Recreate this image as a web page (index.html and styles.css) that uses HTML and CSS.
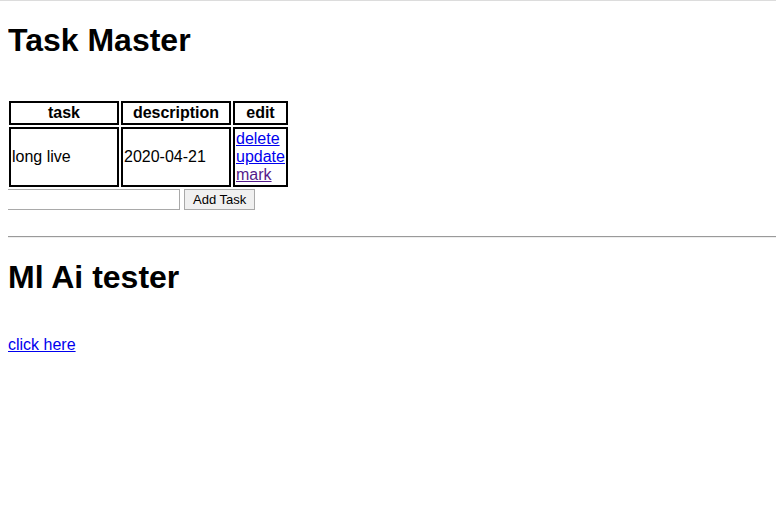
FILE: index.html
```html
<!DOCTYPE html>
<html>
<head>
<meta charset="utf-8">
<title>Task Master</title>
<link rel="stylesheet" href="styles.css">
</head>
<body>
<h1 class="title">Task Master</h1>
<div class="spacer"></div>
<table class="tasks">
  <tr>
    <th class="cell">task</th>
    <th class="cell">description</th>
    <th class="cell">edit</th>
  </tr>
  <tr>
    <td class="cell col-task">long live</td>
    <td class="cell col-desc">2020-04-21</td>
    <td class="cell col-edit">
      <a href="#" class="link">delete</a><br>
      <a href="#" class="link">update</a><br>
      <a href="#" class="link visited">mark</a>
    </td>
  </tr>
</table>
<form class="add-form">
  <input type="text" class="task-input"> <button type="button" class="add-btn">Add Task</button>
</form>
<div class="divider"></div>
<h1 class="title">Ml Ai tester</h1>
<p class="link-row"><a href="#" class="link">click here</a></p>
</body>
</html>
```
FILE: styles.css
```css
html {
  border-top: 1px solid #dcdcdc;
}
body {
  margin: 0 0 8px 8px;
  font-family: "Liberation Sans", Arial, sans-serif;
  font-size: 16px;
  color: #000;
  background: #fff;
}
.title {
  font-size: 32px;
  font-weight: bold;
  margin: 21px 0;
}
.spacer {
  height: 19px;
}
.tasks {
  border-collapse: separate;
  border-spacing: 2px;
  margin-left: -1px;
}
.cell {
  border: 2px solid #000;
  padding: 1px;
}
.col-task {
  width: 104px;
  text-align: left;
}
.col-desc {
  width: 104px;
}
.link {
  color: #0000ee;
}
.link.visited {
  color: #551a8b;
}
.add-form {
  margin: 0 0 0 -1px;
  display: flex;
  align-items: center;
  gap: 4px;
}
.task-input {
  width: 167px;
  height: 17px;
  border: 1px solid #a9a9a9;
  padding: 1px 2px;
  margin: 0;
  font-family: "Liberation Sans", Arial, sans-serif;
  font-size: 13px;
}
.add-btn {
  font-family: "Liberation Sans", Arial, sans-serif;
  font-size: 13px;
  height: 21px;
  padding: 1px 8px;
  border: 1px solid #a9a9a9;
  background: #f0f0f0;
  margin: 0;
}
.divider {
  margin: 26px 0 0 -1px;
  height: 1px;
  background: #9a9a9a;
  border-bottom: 1px solid #eeeeee;
}
.link-row {
  margin: 40px 0 0;
}
```
